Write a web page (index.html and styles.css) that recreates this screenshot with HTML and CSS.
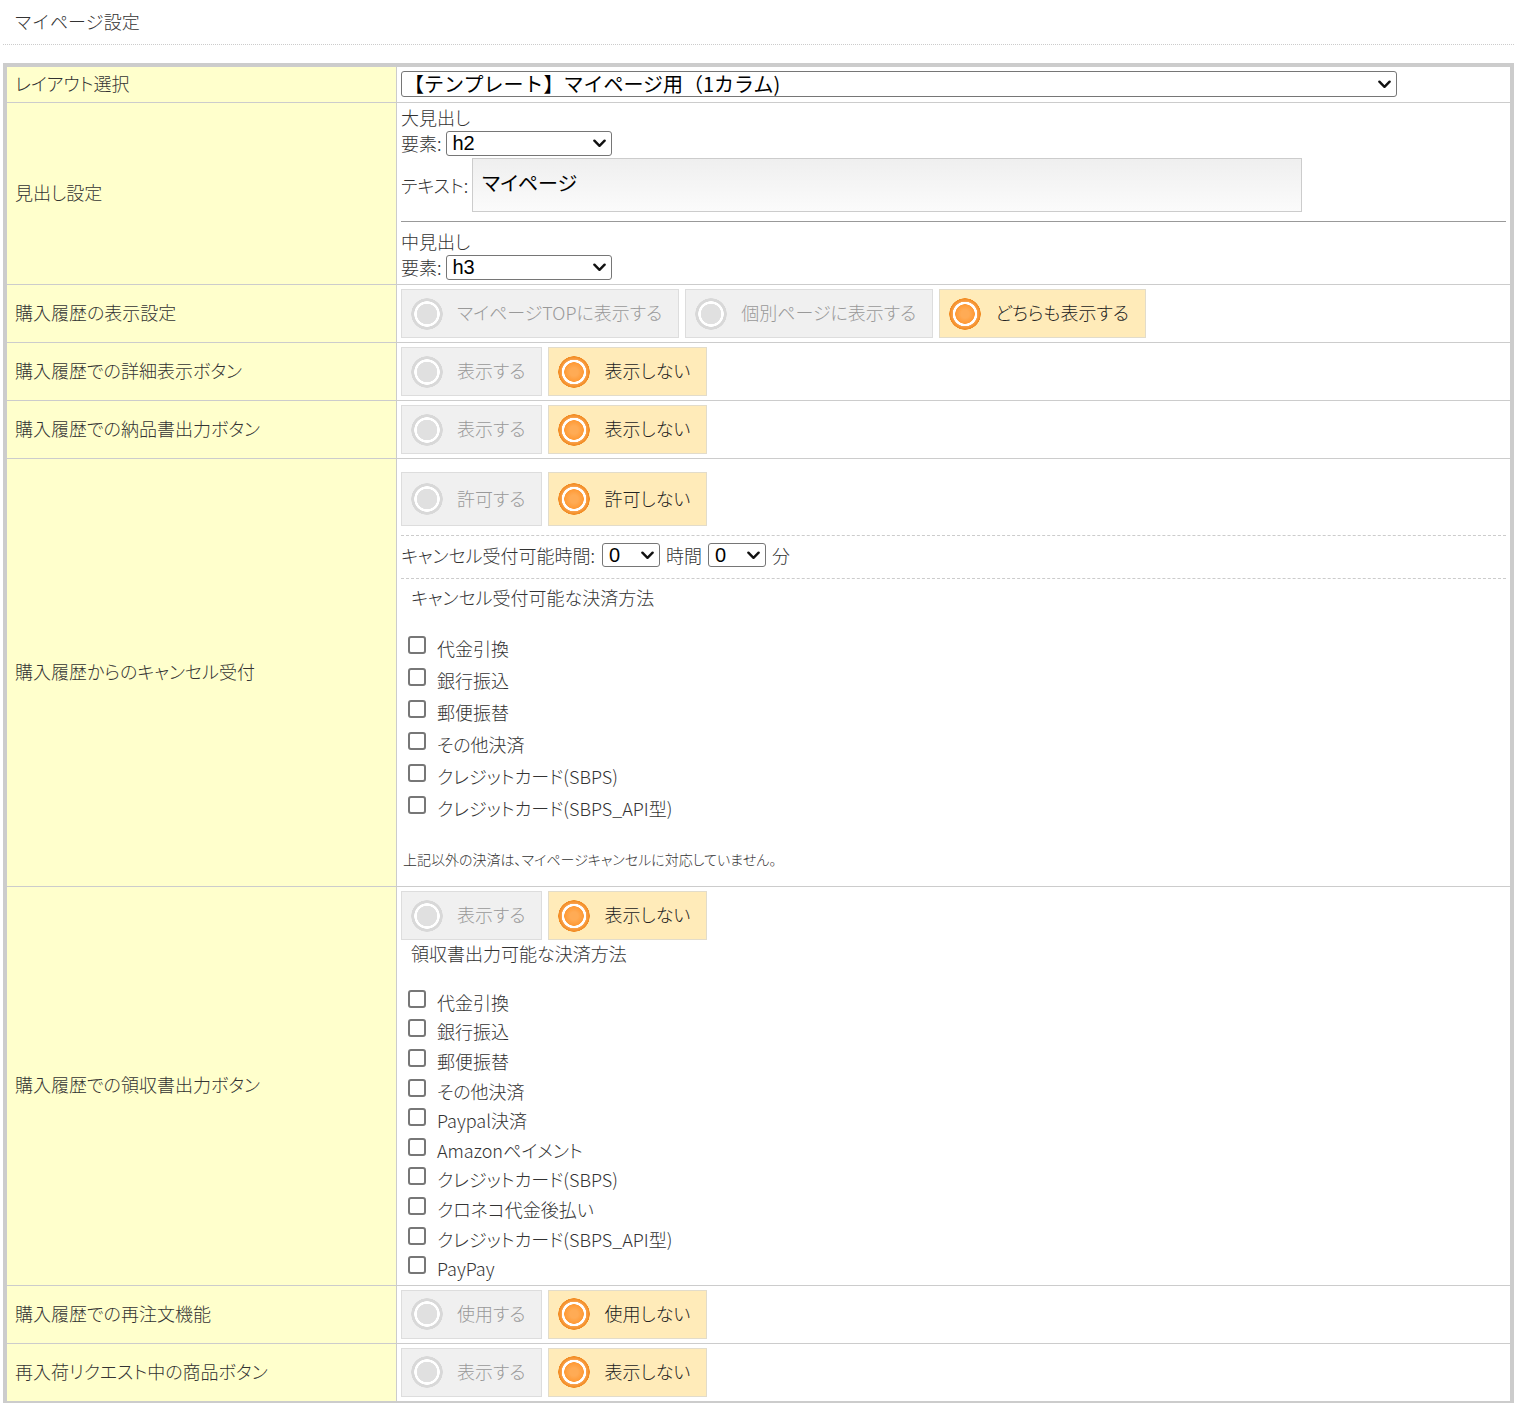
FILE: index.html
```html
<!DOCTYPE html>
<html lang="ja">
<head>
<meta charset="utf-8">
<title>マイページ設定</title>
<link rel="stylesheet" href="styles.css">
</head>
<body>
<div class="page">
  <h1 class="page-title">マイページ設定</h1>
  <table class="settings">
    <tr class="r-layout">
      <th>レイアウト選択</th>
      <td>
        <span class="selbox selbox-wide"><select class="sel"><option>【テンプレート】マイページ用（1カラム)</option></select><svg class="chev" viewBox="0 0 14 9"><polyline points="1.5,1.5 7,7 12.5,1.5"/></svg></span>
      </td>
    </tr>
    <tr class="r-heading">
      <th>見出し設定</th>
      <td>
        <div class="line first">大見出し</div>
        <div class="field-row"><span class="flabel">要素:</span><span class="selbox selbox-small"><select class="sel sel-latin"><option>h2</option></select><svg class="chev" viewBox="0 0 14 9"><polyline points="1.5,1.5 7,7 12.5,1.5"/></svg></span></div>
        <div class="field-row text-row"><span class="flabel">テキスト:</span><div class="text-input">マイページ</div></div>
        <hr class="sep">
        <div class="line">中見出し</div>
        <div class="field-row"><span class="flabel">要素:</span><span class="selbox selbox-small"><select class="sel sel-latin"><option>h3</option></select><svg class="chev" viewBox="0 0 14 9"><polyline points="1.5,1.5 7,7 12.5,1.5"/></svg></span></div>
      </td>
    </tr>
    <tr class="r-radio">
      <th>購入履歴の表示設定</th>
      <td>
        <div class="radios">
          <label class="rb"><span class="dot"></span>マイページTOPに表示する</label>
          <label class="rb"><span class="dot"></span>個別ページに表示する</label>
          <label class="rb on"><span class="dot"></span>どちらも表示する</label>
        </div>
      </td>
    </tr>
    <tr class="r-radio">
      <th>購入履歴での詳細表示ボタン</th>
      <td>
        <div class="radios">
          <label class="rb"><span class="dot"></span>表示する</label>
          <label class="rb on"><span class="dot"></span>表示しない</label>
        </div>
      </td>
    </tr>
    <tr class="r-radio">
      <th>購入履歴での納品書出力ボタン</th>
      <td>
        <div class="radios">
          <label class="rb"><span class="dot"></span>表示する</label>
          <label class="rb on"><span class="dot"></span>表示しない</label>
        </div>
      </td>
    </tr>
    <tr class="r-cancel">
      <th>購入履歴からのキャンセル受付</th>
      <td>
        <div class="radios radios-tall">
          <label class="rb"><span class="dot"></span>許可する</label>
          <label class="rb on"><span class="dot"></span>許可しない</label>
        </div>
        <div class="time-row">
          <span class="time-label">キャンセル受付可能時間:</span>
          <span class="selbox selbox-num"><select class="sel sel-latin"><option>0</option></select><svg class="chev" viewBox="0 0 14 9"><polyline points="1.5,1.5 7,7 12.5,1.5"/></svg></span>
          <span>時間</span>
          <span class="selbox selbox-num"><select class="sel sel-latin"><option>0</option></select><svg class="chev" viewBox="0 0 14 9"><polyline points="1.5,1.5 7,7 12.5,1.5"/></svg></span>
          <span>分</span>
        </div>
        <div class="methods">
          <div class="methods-title">キャンセル受付可能な決済方法</div>
          <ul class="checks">
            <li><span class="cb"></span>代金引換</li>
            <li><span class="cb"></span>銀行振込</li>
            <li><span class="cb"></span>郵便振替</li>
            <li><span class="cb"></span>その他決済</li>
            <li><span class="cb"></span>クレジットカード(SBPS)</li>
            <li><span class="cb"></span>クレジットカード(SBPS_API型)</li>
          </ul>
          <p class="note">上記以外の決済は、マイページキャンセルに対応していません。</p>
        </div>
      </td>
    </tr>
    <tr class="r-receipt">
      <th>購入履歴での領収書出力ボタン</th>
      <td>
        <div class="radios">
          <label class="rb"><span class="dot"></span>表示する</label>
          <label class="rb on"><span class="dot"></span>表示しない</label>
        </div>
        <div class="methods-title receipt-title">領収書出力可能な決済方法</div>
        <ul class="checks checks-tight">
          <li><span class="cb"></span>代金引換</li>
          <li><span class="cb"></span>銀行振込</li>
          <li><span class="cb"></span>郵便振替</li>
          <li><span class="cb"></span>その他決済</li>
          <li><span class="cb"></span>Paypal決済</li>
          <li><span class="cb"></span>Amazonペイメント</li>
          <li><span class="cb"></span>クレジットカード(SBPS)</li>
          <li><span class="cb"></span>クロネコ代金後払い</li>
          <li><span class="cb"></span>クレジットカード(SBPS_API型)</li>
          <li><span class="cb"></span>PayPay</li>
        </ul>
      </td>
    </tr>
    <tr class="r-radio">
      <th>購入履歴での再注文機能</th>
      <td>
        <div class="radios">
          <label class="rb"><span class="dot"></span>使用する</label>
          <label class="rb on"><span class="dot"></span>使用しない</label>
        </div>
      </td>
    </tr>
    <tr class="r-radio">
      <th>再入荷リクエスト中の商品ボタン</th>
      <td>
        <div class="radios">
          <label class="rb"><span class="dot"></span>表示する</label>
          <label class="rb on"><span class="dot"></span>表示しない</label>
        </div>
      </td>
    </tr>
  </table>
</div>
</body>
</html>
```
FILE: styles.css
```css
html, body {
  margin: 0;
  padding: 0;
  background: #fff;
}
body {
  font-family: "Noto Sans CJK JP", "Liberation Sans", sans-serif;
  font-size: 18px;
  font-weight: 300;
  color: #333;
  font-feature-settings: "palt";
}
.page {
  padding: 0 1px 0 3px;
}
.page-title {
  margin: 0;
  font-size: 18px;
  font-weight: 300;
  line-height: 20px;
  padding: 11px 0 13px 11px;
  border-bottom: 1px dotted #ccc;
  color: #333;
  font-feature-settings: normal;
}
.settings {
  margin-top: 18px;
  width: 100%;
  border-collapse: collapse;
  border: 4px solid #ccc;
}
.settings th,
.settings td {
  border: 1px solid #ccc;
  vertical-align: middle;
}
.settings th {
  width: 373px;
  background: #ffffcc;
  text-align: left;
  font-weight: 300;
  padding: 0 8px 3px;
  font-size: 18px;
  color: #333;
}
.settings td {
  padding: 4px 4px;
  text-align: left;
}
.r-layout td { padding: 4px 4px 5px; }

/* select boxes */
.selbox {
  position: relative;
  display: inline-block;
  vertical-align: middle;
}
.sel {
  -webkit-appearance: none;
  appearance: none;
  display: block;
  box-sizing: border-box;
  width: 100%;
  font-family: "Noto Sans CJK JP", "Liberation Sans", sans-serif;
  font-feature-settings: normal;
  font-size: 20px;
  font-weight: 400;
  color: #000;
  height: 26px;
  line-height: 24px;
  border: 1px solid #767676;
  border-radius: 3px;
  background: #fff;
  padding: 0 24px 0 6px;
  margin: 0;
  outline: none;
}
.sel-latin {
  font-family: "Liberation Sans", "Noto Sans CJK JP", sans-serif;
}
.chev {
  position: absolute;
  top: 50%;
  right: 6px;
  width: 13px;
  height: 9px;
  margin-top: -4px;
  pointer-events: none;
}
.chev polyline {
  fill: none;
  stroke: #111;
  stroke-width: 2.6;
  stroke-linecap: round;
  stroke-linejoin: round;
}
.selbox-wide {
  display: block;
  width: 996px;
}
.selbox-wide .sel {
  padding-left: 2px;
}
.selbox-small {
  width: 166px;
}
.selbox-small .sel {
  height: 25px;
  line-height: 23px;
  padding-left: 6px;
}
.selbox-num {
  width: 58px;
}
.selbox-num .sel {
  height: 24px;
  line-height: 22px;
  padding-left: 6px;
}

.line {
  line-height: 20px;
  height: 20px;
  margin-top: 1px;
}
.line.first {
  margin-top: 0;
}
.field-row {
  display: flex;
  align-items: center;
  margin-top: 3px;
}
.flabel {
  margin-right: 4px;
}
.text-row {
  margin-top: 2px;
}
.text-input {
  width: 810px;
  height: 52px;
  border: 1px solid #ccc;
  background: linear-gradient(#efefef, #fbfbfb);
  font-size: 20px;
  font-weight: 400;
  color: #000;
  padding: 0 9px;
  line-height: 48px;
  box-sizing: content-box;
}
.sep {
  border: 0;
  border-top: 1px solid #999;
  margin: 9px 0 9px;
  height: 0;
}

/* radio boxes */
.radios {
  display: flex;
  gap: 6px;
}
.radios-tall {
  margin-top: 9px;
}
.rb {
  display: flex;
  align-items: center;
  gap: 14px;
  height: 44px;
  box-sizing: content-box;
  padding: 0 16px 3px 9px;
  background: #f0f0f0;
  border: 1px solid #ddd;
  color: #999;
  font-size: 18px;
  white-space: nowrap;
}
.radios-tall .rb {
  height: 49px;
}
.rb.on {
  background: #ffebb9;
  border-color: #e2dccb;
  color: #222;
}
.dot {
  flex: none;
  width: 32px;
  height: 32px;
  margin-top: 3px;
  border-radius: 50%;
  background: radial-gradient(circle, #e0e0e0 0 10px, #fff 10.5px 12.5px, #d8d8d8 13px 15.5px, rgba(216,216,216,0) 16px);
}
.rb.on .dot {
  background: radial-gradient(circle, #ffab55 0 4px, #ff9a36 9.5px, #fff 10px 12px, #f9a04a 12.5px, #f18a1f 15.5px, rgba(241,138,31,0) 16px);
}

/* cancel time */
.time-row {
  display: flex;
  align-items: center;
  gap: 6px;
  border-top: 1px dashed #ccc;
  border-bottom: 1px dashed #ccc;
  margin-top: 9px;
  padding: 6px 0 10px;
  white-space: nowrap;
}
.time-label {
  margin-right: 1px;
}
.methods-title {
  padding-left: 10px;
  line-height: 20px;
  margin-top: 8px;
}
.checks {
  list-style: none;
  margin: 25px 0 0;
  padding: 0;
}
.checks li {
  display: flex;
  align-items: center;
  height: 32px;
  font-size: 18px;
  color: #333;
  padding-left: 7px;
}
.cb {
  flex: none;
  box-sizing: border-box;
  width: 18px;
  height: 18px;
  border: 2px solid #777;
  border-radius: 3px;
  background: #fff;
  margin-right: 11px;
  margin-top: -6px;
}
.note {
  margin: 26px 0 0 2px;
  font-size: 14px;
  line-height: 18px;
  color: #333;
  padding-bottom: 14px;
}
.receipt-title {
  margin-top: 3px;
}
.checks-tight {
  margin-top: 24px;
}
.checks-tight li {
  height: 29.6px;
}
.r-receipt td {
  padding-bottom: 2px;
}
```
